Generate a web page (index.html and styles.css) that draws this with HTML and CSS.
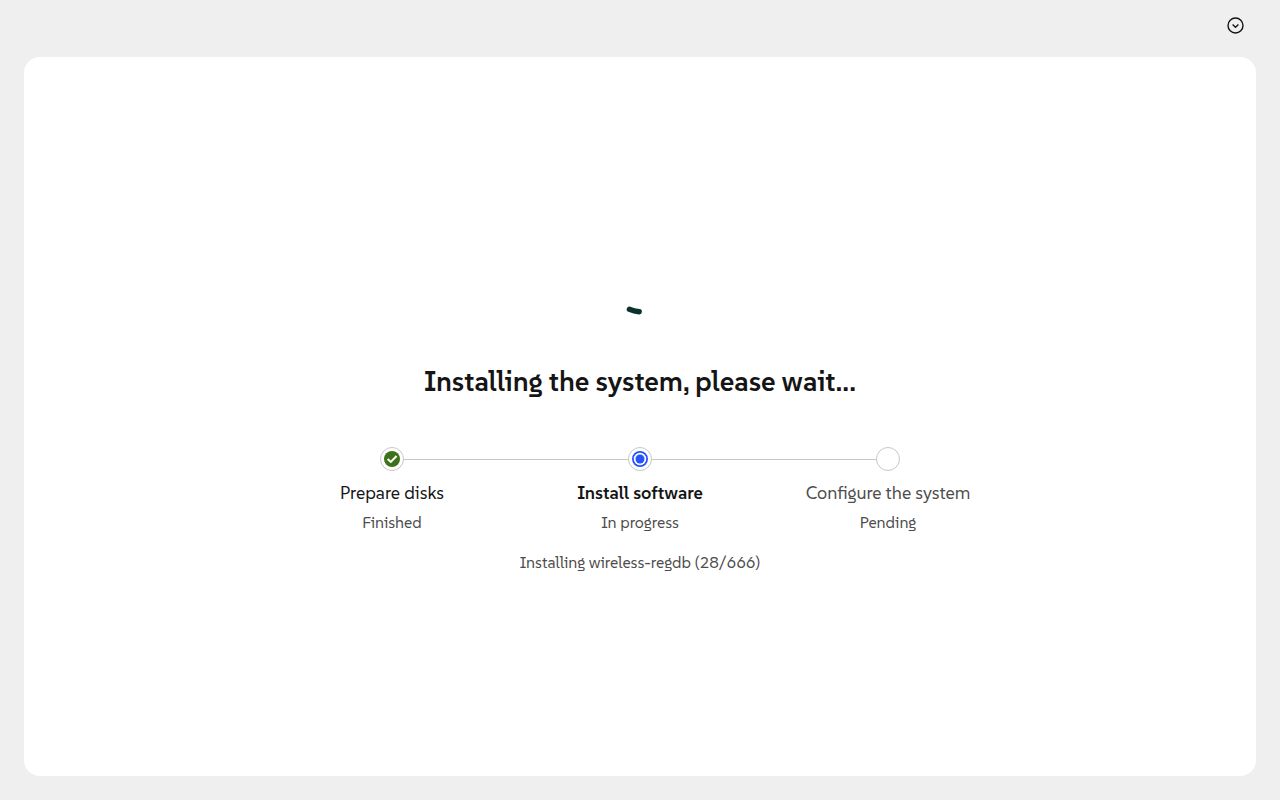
FILE: index.html
```
<!DOCTYPE html>
<html lang="en">
<head>
<meta charset="utf-8">
<meta name="viewport" content="width=device-width, initial-scale=1">
<title>Installing the system</title>
<link rel="stylesheet" href="styles.css">
</head>
<body>
<header class="masthead">
  <button class="menu-toggle" type="button" aria-label="Options" aria-haspopup="menu">
    <svg viewBox="0 0 17 17" width="17" height="17" aria-hidden="true">
      <circle cx="8.5" cy="8.5" r="7.5" fill="none" stroke="currentColor" stroke-width="1.4"/>
      <path d="M5.6 7.4 8.5 10.2l2.9-2.8" fill="none" stroke="currentColor" stroke-width="1.4"/>
    </svg>
  </button>
</header>
<main class="page">
  <section class="progress">
    <svg class="spinner" viewBox="0 0 60 60" width="60" height="60" role="img" aria-label="Loading">
      <path d="M19.4 52.3 Q24 54.2 29.2 54.7" fill="none" stroke="#0c322c" stroke-width="5.4" stroke-linecap="round"/>
    </svg>
    <h1 class="title">Installing the system, please wait...</h1>
    <ol class="steps">
      <li class="step">
        <span class="marker">
          <svg viewBox="0 0 16 16" width="16" height="16" aria-hidden="true">
            <circle cx="8" cy="8" r="8" fill="#3d7317"/>
            <path d="M3.6 7.9 6.8 10.9 12.6 5.1" fill="none" stroke="#fff" stroke-width="2.1"/>
          </svg>
        </span>
        <span class="step-title">Prepare disks</span>
        <span class="status">Finished</span>
      </li>
      <li class="step" aria-current="step">
        <span class="marker">
          <svg viewBox="0 0 16 16" width="16" height="16" aria-hidden="true">
            <circle cx="8" cy="8" r="7.1" fill="none" stroke="#2453ff" stroke-width="1.8"/>
            <circle cx="8" cy="8" r="4.5" fill="#2453ff"/>
          </svg>
        </span>
        <span class="step-title step-title-current">Install software</span>
        <span class="status">In progress</span>
        <span class="status detail">Installing wireless-regdb (28/666)</span>
      </li>
      <li class="step">
        <span class="marker"></span>
        <span class="step-title step-title-pending">Configure the system</span>
        <span class="status">Pending</span>
      </li>
    </ol>
  </section>
</main>
</body>
</html>
```
FILE: styles.css
```
* {
  box-sizing: border-box;
}

body {
  margin: 0;
  min-height: 100vh;
  display: flex;
  flex-direction: column;
  background: #efefef;
  color: #151515;
  font-family: SUSE, "Noto Sans", sans-serif;
  font-size: 16px;
  line-height: 24px;
}

.masthead {
  display: flex;
  justify-content: flex-end;
  padding: 8px 24px 12px;
}

.menu-toggle {
  display: flex;
  padding: 9px 12px 11px;
  border: 0;
  background: none;
  color: #151515;
  cursor: pointer;
}

.page {
  flex: 1;
  display: flex;
  align-items: center;
  justify-content: center;
  margin: 0 24px 24px;
  padding: 24px;
  border-radius: 16px;
  background: #fff;
}

.progress {
  display: flex;
  flex-direction: column;
  align-items: center;
  width: 100%;
  padding-bottom: 2px;
}

.spinner {
  margin-bottom: 45px;
}

.title {
  margin: 0;
  font-size: 28px;
  font-weight: 600;
  line-height: 40px;
  text-align: center;
}

.steps {
  display: grid;
  grid-template-columns: repeat(3, 1fr);
  width: 100%;
  max-width: 744px;
  margin: 45px 0 0;
  padding: 0;
  list-style: none;
}

.step {
  position: relative;
  display: flex;
  flex-direction: column;
  align-items: center;
  text-align: center;
}

.step:not(:last-child)::before {
  content: "";
  position: absolute;
  top: 12px;
  left: 50%;
  width: 100%;
  height: 1px;
  background: #c7c7c7;
}

.marker {
  position: relative;
  z-index: 1;
  display: flex;
  align-items: center;
  justify-content: center;
  width: 24px;
  height: 24px;
  margin-bottom: 8px;
  border: 1px solid #c7c7c7;
  border-radius: 50%;
  background: #fff;
}

.step-title {
  font-size: 18px;
  line-height: 28px;
}

.step-title-current {
  font-weight: 600;
}

.step-title-pending {
  color: #4d4d4d;
}

.status {
  margin-top: 3px;
  color: #4d4d4d;
}

.detail {
  margin-top: 16px;
}
```
